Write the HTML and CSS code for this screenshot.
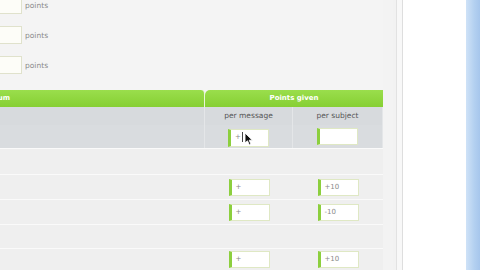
FILE: index.html
```html
<!DOCTYPE html>
<html lang="en">
<head>
    <meta charset="UTF-8">
    <title>Points settings</title>
    <link rel="stylesheet" href="styles.css">
</head>
<body>
    <div class="page">
        <div class="main">
            <div class="limits">
                <div class="limit-row"><span class="field"></span><span class="unit">points</span></div>
                <div class="limit-row"><span class="field"></span><span class="unit">points</span></div>
                <div class="limit-row"><span class="field"></span><span class="unit">points</span></div>
            </div>

            <div class="points-table">
                <div class="head head-first"><span class="head-label">Forum</span></div>
                <div class="head head-points">Points given</div>

                <div class="sub sub-first"></div>
                <div class="sub">per message</div>
                <div class="sub">per subject</div>

                <div class="cell gray"></div>
                <div class="cell gray">
                    <span class="input active">+<span class="caret"></span>
                        <svg class="pointer" width="9" height="14" viewBox="0 0 9 14">
                            <path d="M1 1 L1 11 L3.5 8.8 L5.4 13 L7 12.3 L5.2 8.2 L8.4 8.2 Z" fill="#111" stroke="#fff" stroke-width="0.9"/>
                        </svg>
                    </span>
                </div>
                <div class="cell gray"><span class="input"></span></div>

                <div class="row r0"><div class="cell"></div><div class="cell"></div><div class="cell"></div></div>
                <div class="row r1"><div class="cell"></div><div class="cell"><span class="input">+</span></div><div class="cell"><span class="input">+10</span></div></div>
                <div class="row r2"><div class="cell"></div><div class="cell"><span class="input">+</span></div><div class="cell"><span class="input">-10</span></div></div>
                <div class="row r3"><div class="cell"></div><div class="cell"></div><div class="cell"></div></div>
                <div class="row r4"><div class="cell"></div><div class="cell"><span class="input">+</span></div><div class="cell"><span class="input">+10</span></div></div>
            </div>
        </div>
        <div class="gutter"></div>
        <div class="panel"></div>
        <div class="edge"></div>
    </div>
</body>
</html>
```

FILE: styles.css
```css
* {
    margin: 0;
    padding: 0;
    box-sizing: border-box;
}

body {
    font-family: 'DejaVu Sans', Verdana, sans-serif;
    background: #f4f4f4;
    width: 480px;
    height: 270px;
    overflow: hidden;
}

.page {
    display: flex;
    height: 270px;
}

.main {
    width: 383px;
    flex: none;
}

/* top limit fields */
.limits {
    margin-top: -10px;
    height: 100px;
}

.limit-row {
    display: flex;
    align-items: center;
    height: 30px;
}

.field {
    width: 40px;
    height: 18px;
    margin-left: -18px;
    background: #fdfdf8;
    border: 1px solid #e0e2cc;
}

.unit {
    margin-left: 3px;
    font-size: 7.5px;
    color: #8a8a8a;
}

/* table */
.points-table {
    display: grid;
    grid-template-columns: 205px 88px 90px;
}

.head {
    height: 17px;
    background: linear-gradient(#9ade4c, #86cf33);
    color: #fff;
    font-size: 7px;
    font-weight: bold;
    line-height: 17px;
    overflow: hidden;
}

.head-first {
    border-top-right-radius: 4px;
    border-right: 1px solid #e9f5d8;
}

.head-label {
    display: inline-block;
    margin-left: -15px;
}

.head-points {
    grid-column: span 2;
    border-top-left-radius: 5px;
    text-align: center;
}

.sub {
    height: 18px;
    background: #d7dadd;
    border-right: 1px solid #e4e6e8;
    font-size: 7.5px;
    color: #555;
    text-align: center;
    line-height: 18px;
}

.cell {
    display: flex;
    align-items: center;
    justify-content: center;
}

.cell.gray {
    height: 23px;
    background: #d9dcdf;
    border-right: 1px solid #e4e6e8;
}

.row {
    display: contents;
}

.row .cell {
    background: #efefef;
    border-top: 1px solid #fafafa;
}

.r0 .cell { height: 26px; }
.r1 .cell { height: 25px; }
.r2 .cell { height: 25px; }
.r3 .cell { height: 24px; }
.r4 .cell { height: 26px; align-items: flex-start; padding-top: 2px; }

.input {
    position: relative;
    display: block;
    width: 41px;
    height: 17px;
    background: #fff;
    border: 1px solid #dfe8c4;
    border-left: 3px solid #8ccf3e;
    font-size: 7px;
    line-height: 15px;
    color: #8a8a8a;
    padding-left: 4px;
}

.input.active {
    height: 18px;
    margin-top: 2px;
}

.caret {
    display: inline-block;
    width: 1px;
    height: 10px;
    background: #444;
    margin-left: 1px;
    vertical-align: middle;
}

.pointer {
    position: absolute;
    left: 13px;
    top: 2px;
}

/* right side */
.gutter {
    width: 20px;
    flex: none;
    background: #f2f2f2;
    border-left: 10px solid #f3f3f3;
    border-right: 1px solid #dedede;
    box-shadow: inset -5px 0 0 #f8f8f8, inset -6px 0 0 #e2e2e2;
}

.panel {
    flex: 1;
    background: #fff;
}

.edge {
    width: 14px;
    flex: none;
    background: linear-gradient(90deg, #cfe2f7, #b3d0f0 60%, #a6c6ec);
}
```
